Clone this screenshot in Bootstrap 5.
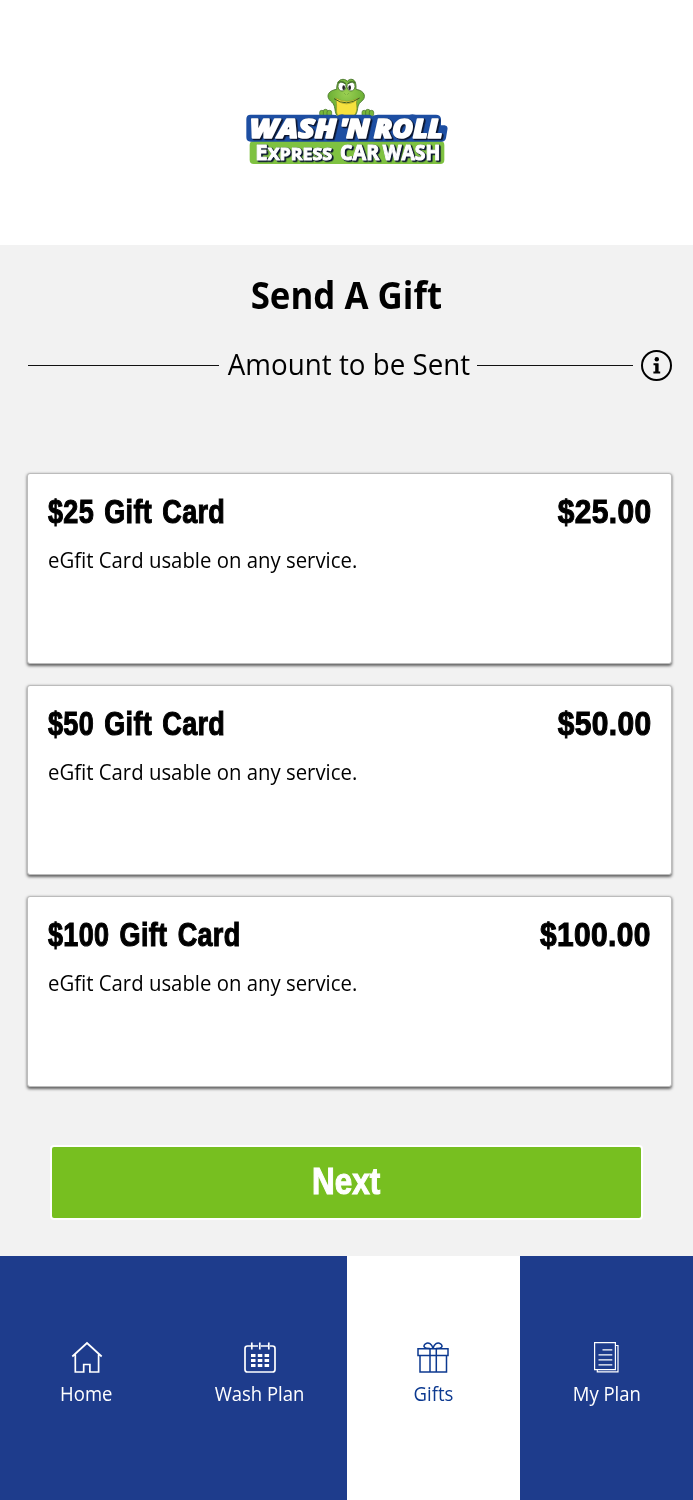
<!DOCTYPE html>
<html lang="en">
<head>
  <meta charset="UTF-8" />
  <meta name="viewport" content="width=device-width, initial-scale=1" />
  <title>Send A Gift</title>
  <link href="https://cdn.jsdelivr.net/npm/bootstrap@5.3.3/dist/css/bootstrap.min.css" rel="stylesheet" />
  <style>
    body {
      height: 1500px;
      background: #f2f2f2;
      color: #000;
      font-family: "Open Sans", "Noto Sans", sans-serif;
    }
    .brand-bar { height: 244.5px; }
    .brand-bar svg { margin: 1px 1px 0 0; }
    .logo-line { fill: #fff; stroke: #fff; stroke-linejoin: round; filter: drop-shadow(3px 3px 0 #0b1630) drop-shadow(2px 1px 0 #0b1630); }

    /* condensed lettering */
    .fit { display: inline-block; white-space: nowrap; transform: scaleX(.925); }
    .fit-start { transform-origin: left center; }
    .fit-end { transform-origin: right center; }
    .fit-title { transform: scaleX(.917); }
    .fit-name { transform: scaleX(.795); word-spacing: 3px; }
    .fit-price { transform: scaleX(.88); }
    .fit-next { transform: scaleX(.85); }
    .heavy {
      font-family: "Liberation Sans", sans-serif;
      font-weight: 700;
      -webkit-text-stroke: 1.1px currentColor;
    }

    .page-title { font-size: 38px; line-height: 52px; margin-top: 23px; }
    .amount-row { height: 42px; margin: 25px 21px 0 27.5px; }
    .amount-row .rule { height: 1.5px; background: #111; }
    .amount-label { width: 242px; font-size: 30px; line-height: 42px; padding-bottom: 4px; }
    .amount-label .fit { margin-left: 1px; }

    .gift-list { gap: 21px; padding: 0 21px 0 27px; margin-top: 86.5px; }
    .gift-card {
      height: 190.7px;
      padding: 14px 20px;
      border: 1px solid #bcbcbc;
      border-radius: 3px;
      box-shadow: 0 1.5px 3px rgba(0, 0, 0, .6);
    }
    .gift-card h2 { font-size: 34px; line-height: 46px; letter-spacing: .4px; }
    .gift-card p { font-size: 22px; line-height: 30px; margin-top: 10px; }

    .btn-next {
      height: 74.5px;
      margin: 58px 50px 0;
      border: 2.5px solid #fff;
      border-radius: 4px;
      font-size: 37px;
      line-height: 1;
      --bs-btn-bg: #77bf20;
      --bs-btn-color: #fff;
      --bs-btn-hover-bg: #6bad1b;
      --bs-btn-hover-color: #fff;
    }
    .btn-next .fit { margin-bottom: 2px; }

    .tab-bar { height: 244.5px; background: #1e3c8c; }
    .tab-bar .nav-link { padding: 83px 0 0; color: #fff; font-size: 20px; line-height: 28px; border-radius: 0; }
    .tab-bar .nav-link.active { background: #fff; color: #0c3990; }
    .tab-bar svg { margin-bottom: 5px; }
  </style>
</head>
<body class="d-flex flex-column overflow-hidden">
  <header class="brand-bar bg-white d-flex justify-content-center align-items-center flex-shrink-0">
    <svg width="220" height="105" viewBox="0 0 660 315" role="img" aria-label="Wash 'N Roll Express Car Wash">
      <defs>
        <radialGradient id="skin" cx=".5" cy=".4" r=".65">
          <stop offset="0" stop-color="#9bd052" />
          <stop offset="1" stop-color="#5da52c" />
        </radialGradient>
      </defs>
      <!-- frog -->
      <g stroke="#426f27" stroke-width="2.5">
        <path d="M302 136C294 120 300 108 287 96C268 82 274 62 302 58C302 38 309 28 321 28C328 28 332 31 334 34C337 29 343 27 348 28C358 30 361 42 360 58C388 62 393 84 374 96C361 108 368 122 358 136Z" fill="url(#skin)" />
        <path d="M299 84Q332 104 367 84Q358 94 362 106C364 118 362 128 355 136H305C298 124 305 108 299 84Z" fill="#f6e13e" stroke="#8a9527" stroke-width="2" />
        <path d="M294 86Q331 112 371 84" fill="none" stroke="#3b5a22" stroke-width="3" />
        <path d="M308 95Q331 108 356 95" fill="none" stroke="#a59b25" stroke-width="2" />
        <ellipse cx="318" cy="49" rx="12" ry="14" fill="#fff" />
        <ellipse cx="345" cy="49" rx="12" ry="14" fill="#fff" />
        <ellipse cx="323" cy="53" rx="4" ry="7" fill="#222" stroke="none" />
        <ellipse cx="341" cy="53" rx="4" ry="7" fill="#222" stroke="none" />
        <path d="M305 38Q316 32 329 41M336 41Q347 32 358 38" fill="none" stroke-width="4" />
        <path d="M326 71l2 2M337 71l-2 2" />
      </g>
      <g fill="#78b73c" stroke="#426f27" stroke-width="2">
        <rect x="251" y="121" width="13" height="18" rx="6" />
        <rect x="262" y="118" width="13" height="21" rx="6" />
        <rect x="273" y="121" width="14" height="18" rx="6" />
        <rect x="378" y="121" width="13" height="18" rx="6" />
        <rect x="389" y="118" width="13" height="21" rx="6" />
        <rect x="400" y="121" width="13" height="18" rx="6" />
      </g>
      <!-- green and blue plates -->
      <rect x="41" y="213" width="584" height="69" rx="12" fill="#7fc241" />
      <path d="M44 134H290Q301 134 304 138Q312 131 326 134H398Q406 134 409 139Q414 134 426 134H520Q528 131 540 134H600Q613 134 615 146V166H626Q637 168 634 180L630 204Q628 215 616 215H44Q31 215 31 202V147Q31 134 44 134Z" fill="#1d4ea2" />
      <g class="logo-line" font-weight="800" font-style="italic" font-size="77" stroke-width="5">
        <text x="41" y="203" textLength="260" lengthAdjust="spacingAndGlyphs">WASH</text>
        <text x="311" y="203" textLength="90" lengthAdjust="spacingAndGlyphs">'N</text>
        <text x="414" y="203" textLength="206" lengthAdjust="spacingAndGlyphs">ROLL</text>
      </g>
      <g class="logo-line" font-weight="700" font-size="62" stroke-width="3">
        <text x="58" y="271" textLength="230" lengthAdjust="spacingAndGlyphs">E<tspan font-size="50">XPRESS</tspan></text>
        <text x="312" y="271" textLength="118" lengthAdjust="spacingAndGlyphs">CAR</text>
        <text x="440" y="271" textLength="173" lengthAdjust="spacingAndGlyphs">WASH</text>
      </g>
    </svg>
  </header>

  <main class="flex-grow-1 d-flex flex-column">
    <h1 class="page-title text-center fw-bold mb-0"><span class="fit fit-title">Send A Gift</span></h1>

    <div class="amount-row d-flex align-items-center">
      <div class="rule flex-grow-1"></div>
      <div class="amount-label d-flex justify-content-center mx-2"><span class="fit">Amount to be Sent</span></div>
      <div class="rule me-2" style="width: 156px"></div>
      <svg width="31" height="31" viewBox="0 0 31 31" fill="none" stroke="#000" role="img" aria-label="Info">
        <circle cx="15.5" cy="15.5" r="14.5" stroke-width="2" />
        <circle cx="15.8" cy="9.2" r="2.2" fill="#000" stroke="none" />
        <path d="M12.5 14.2h4v8.2M12.4 22.4h6.8" stroke-width="2" />
        <path d="M15.7 14v8" stroke-width="3" />
      </svg>
    </div>

    <div class="gift-list d-flex flex-column">
      <div class="gift-card bg-white">
        <div class="d-flex justify-content-between">
          <h2 class="heavy mb-0"><span class="fit fit-start fit-name">$25 Gift Card</span></h2>
          <h2 class="heavy mb-0"><span class="fit fit-end fit-price">$25.00</span></h2>
        </div>
        <p class="mb-0"><span class="fit fit-start">eGfit Card usable on any service.</span></p>
      </div>
      <div class="gift-card bg-white">
        <div class="d-flex justify-content-between">
          <h2 class="heavy mb-0"><span class="fit fit-start fit-name">$50 Gift Card</span></h2>
          <h2 class="heavy mb-0"><span class="fit fit-end fit-price">$50.00</span></h2>
        </div>
        <p class="mb-0"><span class="fit fit-start">eGfit Card usable on any service.</span></p>
      </div>
      <div class="gift-card bg-white">
        <div class="d-flex justify-content-between">
          <h2 class="heavy mb-0"><span class="fit fit-start fit-name">$100 Gift Card</span></h2>
          <h2 class="heavy mb-0"><span class="fit fit-end fit-price">$100.00</span></h2>
        </div>
        <p class="mb-0"><span class="fit fit-start">eGfit Card usable on any service.</span></p>
      </div>
    </div>

    <button type="button" class="btn btn-next heavy p-0"><span class="fit fit-next">Next</span></button>
  </main>

  <nav class="tab-bar nav nav-fill flex-nowrap flex-shrink-0">
    <a class="nav-link col-3 d-flex flex-column align-items-center" href="#">
      <svg width="34" height="36" viewBox="0 0 34 36" fill="none" stroke="currentColor" stroke-width="1.7">
        <path d="M2.3 17.5 17 4l14.7 13.5M5.3 15.5V33h8.4v-7.5h6.2V33h8.7V15.5" />
      </svg>
      <span class="fit">Home</span>
    </a>
    <a class="nav-link col-3 d-flex flex-column align-items-center" href="#">
      <svg width="34" height="36" viewBox="0 0 34 36" fill="none" stroke="currentColor" stroke-width="1.7">
        <path d="M8 7H4.5Q2 7 2 9.500V30.500Q2 33 4.500 33H29.500Q32 33 32 30.500V9.500Q32 7 29.500 7H27M9 7h6M18 7h7M8.800 3.500v7M16.800 3.500v7M25.800 3.500v7" />
        <path d="M8 16.500h4.500M14.800 16.500h4.500M21.600 16.500h4.500M8 21.500h4.500M14.800 21.500h4.500M21.600 21.500h4.500M8 26.500h4.500M14.800 26.500h4.500M21.600 26.500h4.500" stroke-width="3" />
      </svg>
      <span class="fit">Wash Plan</span>
    </a>
    <a class="nav-link active col-3 d-flex flex-column align-items-center" href="#">
      <svg width="34" height="36" viewBox="0 0 34 36" fill="none" stroke="currentColor" stroke-width="1.5">
        <path d="M2 9.700h30v6.800H2zM4 16.500h26.500V33H4zM14 9.700V33M20.300 9.700V33" />
        <path d="M14 9.500C7 9.500 7 7 9.500 4.800C12.500 2.700 16 5 17 9.500C18 5 21.500 2.700 24.500 4.800C27 7 27 9.500 20 9.500" />
      </svg>
      <span class="fit">Gifts</span>
    </a>
    <a class="nav-link col-3 d-flex flex-column align-items-center" href="#">
      <svg width="34" height="36" viewBox="0 0 34 36" fill="none" stroke="currentColor" stroke-width="1.2">
        <path d="M5.600 3.600h20.800v27H5.600zM26.500 6.500h2.500v26.300H8.300v-2" />
        <path d="M13.500 10.800h9.800M9.500 15.800h13.800M9.500 20.800h13.800M9.500 25.800h13.800" />
      </svg>
      <span class="fit">My Plan</span>
    </a>
  </nav>

  <script src="https://cdn.jsdelivr.net/npm/bootstrap@5.3.3/dist/js/bootstrap.bundle.min.js"></script>
</body>
</html>
